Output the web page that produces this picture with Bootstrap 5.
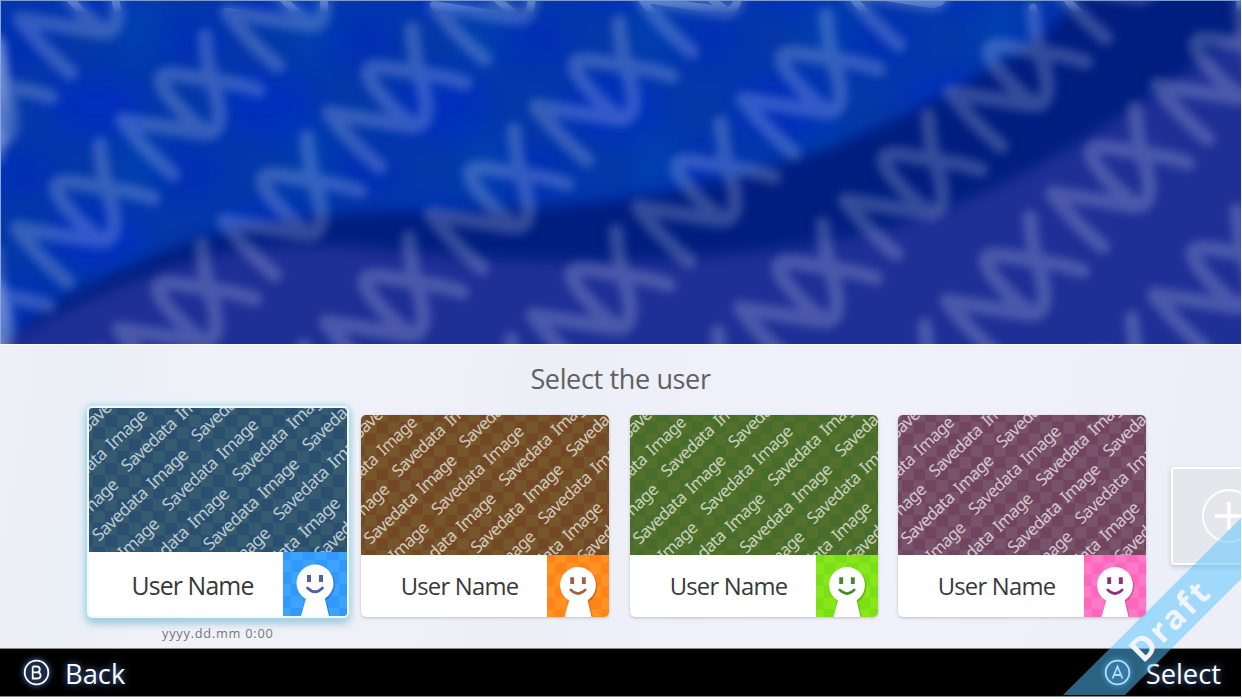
<!DOCTYPE html>
<html lang="en">
<head>
<meta charset="utf-8">
<title>Select the user</title>
<link href="https://cdn.jsdelivr.net/npm/bootstrap@5.3.0/dist/css/bootstrap.min.css" rel="stylesheet">
<style>
html,body{height:699px;overflow:hidden}
body{font-family:"Open Sans","Noto Sans",sans-serif;background:#fff;color:#333}
.screen{width:1241px;height:697px;background:linear-gradient(100deg,#eff1f6 0,#ebeff6 12%,#f1f2f8 25%,#edeff7 45%,#f0f1fa 70%,#eceef8 100%)}
.banner{height:344px;border-top:1px solid #7f98cd;border-left:1px solid #8ca5d8}
.banner svg{display:block}
.picker{height:304px;border-top:1px solid #fdfdff}
.picker h1{font-size:27px;line-height:36px;font-weight:400;color:#606060;margin:16px 0 0;letter-spacing:-.35px}
.users{margin-left:87px;margin-top:9px;height:216px}
.user-card{width:248px;height:202px;border:0;border-radius:5px;background:#fff;overflow:hidden;box-shadow:0 1px 3px rgba(90,100,130,.35);flex:none}
.user-card .foot{height:62px}
.user-card .nm{font-size:23.8px;letter-spacing:-.75px;color:#383838;padding-left:11px;padding-top:2px;white-space:nowrap}
.user-card .face{width:62px;height:62px;flex:none}
.user-card .shot{height:140px;display:block;width:248px}
.user-card.active{width:262px;height:212px;border:2px solid #eefaff;box-shadow:0 0 6px 1px #a8dcf2,0 5px 9px rgba(90,160,190,.6)}
.active .shot{height:144px;width:258px}
.active .foot{height:64px}
.active .nm{font-size:24.8px;letter-spacing:-.85px;padding-left:13px;padding-top:4px}
.active .face{width:64px;height:64px}
.stamp{font-size:12.8px;letter-spacing:.75px;color:#777;line-height:16px;margin-left:162px;margin-top:3px}
.add{width:90px;height:98px;border:2px solid #fff;border-radius:4px;background:#e6e7ed;box-shadow:0 2px 5px rgba(90,100,130,.3);flex:none}
.bottombar{height:49px;background:#000;border-top:1px solid #888;border-bottom:1px solid #888;color:#fff;font-size:27.3px;text-shadow:0 0 7px #5b86d8}
.bottombar span{line-height:36px;padding-top:2px}
.bottombar svg{filter:drop-shadow(0 0 3px #4a76cc)}
.ribbon{right:-1px;bottom:-2px;pointer-events:none}
</style>
</head>
<body>
<main class="screen position-relative overflow-hidden d-flex flex-column">
<section class="banner">
<svg width="1240" height="343" viewBox="1 1 1240 343">
<defs>
<filter id="soft" x="-5%" y="-5%" width="110%" height="110%" color-interpolation-filters="sRGB"><feGaussianBlur stdDeviation="7"/></filter>
<filter id="mist" x="-5%" y="-5%" width="110%" height="110%" color-interpolation-filters="sRGB"><feGaussianBlur stdDeviation="5"/></filter>
<filter id="wide" x="-5%" y="-5%" width="110%" height="110%" color-interpolation-filters="sRGB"><feGaussianBlur stdDeviation="15"/></filter>
<filter id="glow" x="-300%" y="-50%" width="700%" height="200%" color-interpolation-filters="sRGB"><feGaussianBlur stdDeviation="5"/></filter>
<pattern id="tiles" width="172" height="132" patternUnits="userSpaceOnUse" x="10" y="40">
<rect width="172" height="132" fill="#0438a8"/>
<ellipse cx="86" cy="66" rx="52" ry="36" fill="#0030bc"/>
<ellipse cx="0" cy="132" rx="50" ry="30" fill="#0030b4"/><ellipse cx="172" cy="132" rx="50" ry="30" fill="#0030b4"/>
<ellipse cx="0" cy="0" rx="50" ry="30" fill="#0030b4"/><ellipse cx="172" cy="0" rx="50" ry="30" fill="#0030b4"/>
<ellipse cx="130" cy="122" rx="22" ry="34" fill="#0040b0"/><ellipse cx="130" cy="-10" rx="22" ry="34" fill="#0040b0"/>
</pattern>
<linearGradient id="fade" x2="0" y2="1"><stop offset=".3" stop-color="#fff"/><stop offset="1" stop-color="#000"/></linearGradient>
<mask id="topmask"><rect width="1242" height="13" fill="url(#fade)"/></mask>
<g id="squig" fill="none" stroke-linecap="round" stroke-linejoin="round">
<path d="M46 12Q22 4 0 2L-36 -4Q-60 -7 -46 14Q-30 36 -8 52"/>
<path d="M-7 -42Q-6 -22 0 4Q9 30 7 42Q5 56 -8 55L-90 42Q-72 68 -39 96"/>
</g>
</defs>
<g filter="url(#wide)"><rect x="-40" y="-40" width="1330" height="430" fill="url(#tiles)"/></g>
<g filter="url(#soft)">
<path d="M-20 350L20 328C70 290 130 262 200 238C270 218 340 211 420 211C560 212 680 195 760 170C860 142 960 92 1050 30L1100 -30H1280V400H-20Z" fill="#001e80"/>
<path d="M-20 360L20 335C100 290 180 258 260 246C350 240 450 260 560 261C700 262 800 250 900 225C1010 190 1130 120 1280 0V400H-20Z" fill="#1e2f96"/>
</g>
<g id="fog" filter="url(#mist)" stroke="#fff" stroke-width="15" opacity=".2"></g>
<g mask="url(#topmask)"><g id="crisp" stroke="#dff" stroke-width="8" opacity=".22"></g></g>
<ellipse cx="-2" cy="100" rx="10" ry="65" fill="#a9bdf4" opacity=".5" filter="url(#glow)"/>
<ellipse cx="-2" cy="322" rx="10" ry="42" fill="#a9bdf4" opacity=".5" filter="url(#glow)"/>
</svg>
</section>
<section class="picker d-flex flex-column">
<h1 class="text-center">Select the user</h1>
<div class="users d-flex" id="users"></div>
<div class="stamp">yyyy.dd.mm 0:00</div>
</section>
<footer class="bottombar d-flex align-items-center justify-content-between">
<div class="d-flex align-items-center" style="padding-left:23px;gap:15px">
<svg width="27" height="27" viewBox="0 0 27 27" fill="none" stroke="#fff"><circle cx="13.5" cy="13.5" r="11.8" stroke-width="1.8" fill="#1b2a4a"/><path d="M9.7 7.5V19.5H14Q17.6 19.5 17.6 16.2Q17.6 13.3 14 13.3H9.7M9.7 7.5H13.6Q16.8 7.5 16.8 10.4Q16.8 13.3 13.6 13.3" stroke-width="1.8"/></svg>
<span>Back</span></div>
<div class="d-flex align-items-center" style="padding-right:20px;gap:15px">
<svg width="27" height="27" viewBox="0 0 27 27" fill="none" stroke="#fff"><circle cx="13.5" cy="13.5" r="11.8" stroke-width="1.8" fill="#1b2a4a"/><path d="M8.5 19.5L13.5 7.5L18.5 19.5M10 16H17" stroke-width="1.8"/></svg>
<span>Select</span></div>
</footer>
<svg class="ribbon position-absolute" width="182" height="182" viewBox="1060 517 182 182">
<path d="M1242 517V578L1125 695H1063Z" fill="#55c3ff" fill-opacity=".5"/>
<text transform="translate(1143 664) rotate(-45)" font-family="Noto Sans" font-weight="700" font-size="33" fill="#f2f4fb" textLength="97">Draft</text>
</svg>
</main>
<script>
// Repeating swirl marks across the banner
const spots=[];
for(let r=-1;r<4;r++)for(let c=-3;c<8;c++)spots.push(`<use href="#squig" x="${212+207*c-105*r}" y="${78-7*c+108*r}"/>`);
fog.innerHTML=crisp.innerHTML=spots.join('');

// Save slots
const slots=[['#2b4f70','#345b70','#3098ff','#3ca3ff','#4f5fa8'],['#744825','#75572b','#ff8318','#ff9321','#a06038'],['#466d29','#53712d','#79e018','#88e61b','#438a2c'],['#724460','#79536a','#ff67be','#ff7ac6','#8c2f7c']];
let label='';
for(let i=-6;i<9;i++)for(let j=-6;j<9;j++){
 const x=10+70*i+41*j,y=134-30*i+39.3*j;
 if(x>-78&&x<248&&y>8&&y<214&&x+y>20&&x<y+225)label+=`<text transform="translate(${x} ${y}) rotate(-43.5)" textLength="125" word-spacing="3">Savedata Image</text>`;
}
const gaps=[0,12,21,20];
users.innerHTML=slots.map((s,i)=>`
<div class="user-card ${i?'':'active'}" style="margin-left:${gaps[i]}px;margin-top:${i?9:0}px">
<svg class="shot" viewBox="0 0 258 144" preserveAspectRatio="none">
<defs><pattern id="k${i}" width="24" height="24" patternUnits="userSpaceOnUse" x="4" y="7"><rect width="24" height="24" fill="${s[0]}"/><path d="M0 0h12v24h12v-12H0Z" fill="${s[1]}"/></pattern>
<pattern id="f${i}" width="24" height="24" patternUnits="userSpaceOnUse" x="8" y="8"><rect width="24" height="24" fill="${s[3]}"/><path d="M0 0h12v24h12v-12H0Z" fill="${s[2]}"/></pattern></defs>
<rect width="258" height="144" fill="url(#k${i})"/>
<g font-family="Noto Sans" font-size="17.3" fill="#fff" fill-opacity=".7">${label}</g></svg>
<div class="foot d-flex"><div class="nm flex-grow-1 d-flex align-items-center justify-content-center">User Name</div>
<svg class="face" viewBox="0 0 64 64"><rect width="64" height="64" fill="url(#f${i})"/>
<g transform="translate(1.5 1.5)" fill="#000" opacity=".2"><circle cx="32" cy="31" r="18.5"/><path d="M24 43L18 64H46L41 43Z"/></g>
<g fill="#fff"><circle cx="32" cy="31" r="18.5"/><path d="M24 43L18 64H46L41 43Z"/></g>
<path d="M24 23h4v7h-4zM36 23h4v7h-4z" fill="${s[4]}"/><path d="M24.5 36Q32 43.5 39.5 36" fill="none" stroke="${s[4]}" stroke-width="2.8" stroke-linecap="round"/></svg></div></div>`).join('')+`
<div class="add" style="margin-left:25px;margin-top:61px"><svg width="90" height="94" fill="none" stroke="#fff"><circle cx="56" cy="47" r="26" stroke-width="1.8"/><path d="M42 47H70M56 33V61" stroke-width="3.4"/></svg></div>`;
</script>
<script src="https://cdn.jsdelivr.net/npm/bootstrap@5.3.0/dist/js/bootstrap.bundle.min.js"></script>
</body>
</html>
